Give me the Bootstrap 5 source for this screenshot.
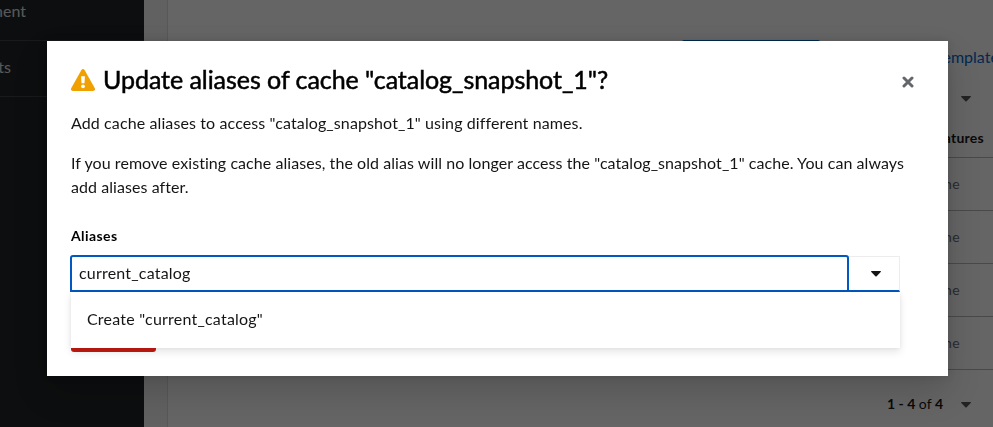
<!DOCTYPE html>
<html lang="en">
<head>
<meta charset="utf-8">
<meta name="viewport" content="width=device-width, initial-scale=1">
<title>Update aliases</title>
<link href="https://cdn.jsdelivr.net/npm/bootstrap@5.3.0/dist/css/bootstrap.min.css" rel="stylesheet">
<style>
body{font-family:Lato,"Open Sans",sans-serif;font-size:16px;line-height:24px;color:#151515;height:427px;overflow:hidden}
.side{width:144px;background:#1e2123;color:#fff}
.side-item{height:56px;border-bottom:1px solid #3c3f42}
.side-item.first{height:41px}
.side-item span{display:flex;justify-content:flex-end;overflow:hidden;white-space:nowrap;opacity:.85}
.side-item.first span{width:26px;margin-top:-1px}
.side-item.second span{width:11px;margin-top:14px}
.gutter{width:24px;background:#f4f4f4;border-right:1px solid #dedede}
.page-top{height:78px;padding-top:40px}
.cta{width:138px;height:36px;margin-left:514px;background:#06c;border-radius:2px}
.tpl{width:58px;padding-top:5px;white-space:nowrap;color:#06c}
.tools{height:40px;padding:1px 22px 0 0}
.row-line{height:53px;border-bottom:1px solid #b8b8b8;padding-right:33px;font-size:14px;color:#6a6e73;letter-spacing:.4px}
.row-line.head{height:40px;padding-right:9px;color:#151515;font-weight:700;letter-spacing:.25px}
.pager{height:57px;padding:10px 22px 0 0;font-size:14px}
.pager .amount{margin-right:18px}
.caret{width:10px;height:6px;display:block}
.pager .caret{margin-top:2px}
.shade{background:rgba(3,3,3,.61)}
.modal .modal-dialog{width:901px;max-width:none;margin:41px 0 0 47px}
.modal .modal-content{height:335px;border:0;border-radius:0;padding:24px;box-shadow:0 16px 32px rgba(3,3,3,.16),0 0 8px rgba(3,3,3,.12);color:#151515}
.modal-title{font-size:25px;line-height:31px;font-weight:400;-webkit-text-stroke:.5px #000;letter-spacing:-.05px;color:#000;margin:-1px 0 1px 8px}
.warn{width:24px;height:22px;margin-top:-1px}
.x-btn{width:12px;height:12px;margin:3px 10px 0 0;padding:0;border:0;background:none;display:flex}
.line-one{margin:15px 0 16px;letter-spacing:.11px}
.line-two{margin:0;letter-spacing:.065px;white-space:nowrap}
.field-label{font-size:14px;line-height:21px;font-weight:700;color:#000;margin:26px 0 9px;letter-spacing:.4px}
.combo{position:relative;width:829px;height:37px}
.combo input{width:779px;flex:none;margin-left:-1px;border:2px solid #0059c0;border-radius:3px 3px 0 0;padding:0 7px 2px;color:#151515;outline:0;font:inherit;letter-spacing:.2px}
.toggle{width:51px;margin-top:1px;border:1px solid #ededed;border-left:0;border-bottom:2px solid #0059c0;background:#fff;padding:0 0 0 3px}
.choices{position:absolute;left:0;top:37px;width:829px;height:56px;padding:15px 16px;background:#fff;box-shadow:0 4px 8px rgba(3,3,3,.1),0 0 4px rgba(3,3,3,.06);letter-spacing:.22px;z-index:2}
.save{width:85px;height:36px;margin-top:24px;background:#c41a12;border-radius:3px}
</style>
<script src="https://cdn.jsdelivr.net/npm/bootstrap@5.3.0/dist/js/bootstrap.bundle.min.js"></script>
</head>
<body>
<div class="d-flex h-100 overflow-hidden">
  <nav class="side flex-shrink-0">
    <div class="side-item first overflow-hidden"><span>ment</span></div>
    <div class="side-item second overflow-hidden"><span>ts</span></div>
  </nav>
  <div class="gutter flex-shrink-0"></div>
  <main class="flex-grow-1 bg-white">
    <div class="page-top d-flex justify-content-between"><div class="cta"></div><div class="tpl">Template</div></div>
    <div class="tools d-flex align-items-center justify-content-end"><svg class="caret" viewBox="0 0 10 6"><path d="M.5 0h9q.7.3.2 1L5.6 5.2q-.6.5-1.2 0L.3 1Q-.2.3.5 0z" fill="#555"/></svg></div>
    <div class="row-line head d-flex align-items-center justify-content-end">Features</div>
    <div class="row-line d-flex align-items-center justify-content-end">None</div>
    <div class="row-line d-flex align-items-center justify-content-end">None</div>
    <div class="row-line d-flex align-items-center justify-content-end">None</div>
    <div class="row-line d-flex align-items-center justify-content-end">None</div>
    <div class="pager d-flex align-items-center justify-content-end"><span class="amount"><b>1 - 4</b> of <b>4</b></span><svg class="caret" viewBox="0 0 10 6"><path d="M.5 0h9q.7.3.2 1L5.6 5.2q-.6.5-1.2 0L.3 1Q-.2.3.5 0z" fill="#555"/></svg></div>
  </main>
</div>
<div class="modal d-block shade overflow-hidden" role="dialog" aria-modal="true">
  <div class="modal-dialog">
    <div class="modal-content">
      <div class="d-flex align-items-center">
        <svg class="warn" viewBox="0 0 24 22"><path d="M10.3 1.2q1.7-2.4 3.4 0l10 17.8q1.1 2.6-1.7 3H2q-2.8-.4-1.7-3z" fill="#f0a000"/><path d="M10.1 7.2h3.8l-.4 7h-3z" fill="#fff"/><circle cx="12" cy="17.3" r="1.9" fill="#fff"/></svg>
        <h1 class="modal-title">Update aliases of cache "catalog_snapshot_1"?</h1>
        <button class="x-btn ms-auto" aria-label="Close"><svg width="12" height="12" viewBox="0 0 12 12"><path d="M2 2l8 8M10 2l-8 8" stroke="#63666b" stroke-width="3" stroke-linecap="round"/></svg></button>
      </div>
      <p class="line-one">Add cache aliases to access "catalog_snapshot_1" using different names.</p>
      <p class="line-two">If you remove existing cache aliases, the old alias will no longer access the "catalog_snapshot_1" cache. You can always<br>add aliases after.</p>
      <label class="field-label" for="alias">Aliases</label>
      <div class="combo d-flex">
        <input id="alias" type="text" value="current_catalog">
        <button class="toggle d-flex align-items-center justify-content-center flex-shrink-0" aria-label="Options"><svg class="caret" viewBox="0 0 10 6"><path d="M.5 0h9q.7.3.2 1L5.6 5.2q-.6.5-1.2 0L.3 1Q-.2.3.5 0z" fill="#151515"/></svg></button>
        <div class="choices">Create "current_catalog"</div>
      </div>
      <div class="save"></div>
    </div>
  </div>
</div>
</body>
</html>
